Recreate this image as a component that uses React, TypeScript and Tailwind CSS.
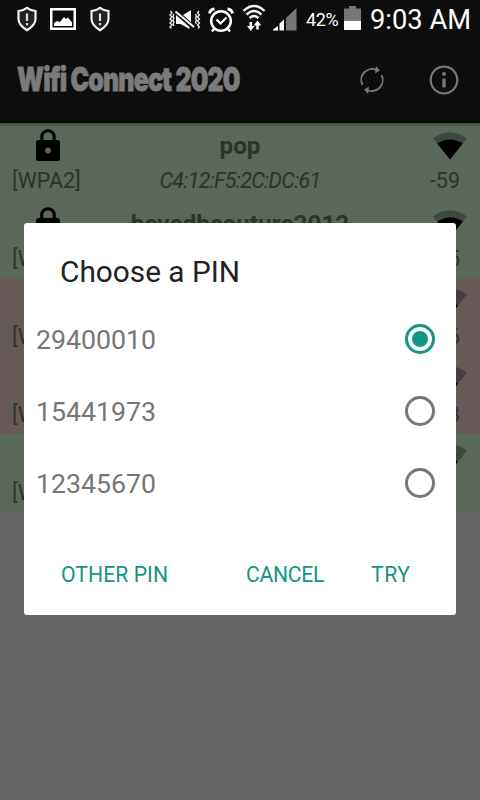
import type { ReactNode } from "react";

function ShieldIcon() {
  return (
    <svg width="20" height="26" viewBox="0 0 20 26" fill="none" stroke="#f4f4f4" strokeWidth="2.200">
      <path d="M10 1.800 Q13.500 4.500 18.500 5 V13 C18.500 18 14.500 21.500 10 24.300 C5.500 21.500 1.500 18 1.500 13 V5 Q6.500 4.500 10 1.800Z" fill="#222" />
      <path d="M10 7.500V15M10 17v2.200" stroke="#ddd" />
    </svg>
  );
}

function PictureIcon() {
  return (
    <svg width="26" height="22" viewBox="0 0 26 22">
      <rect x="1.250" y="1.250" width="23.500" height="19.500" fill="none" stroke="#fff" strokeWidth="2.500" />
      <path d="M4 18v-3l3-2 3 1 4-5 2 2 2-1.500 4 5V18Z" fill="#fff" />
    </svg>
  );
}

function MuteIcon() {
  return (
    <svg width="32" height="22" viewBox="0 0 32 22">
      <path d="M7 7v8h4.500l9 5v-2L7 6ZM14 6l8-5v12Z" fill="#fff" />
      <path d="M6.500 2.500 L25 18" stroke="#fff" strokeWidth="2.200" />
      <path d="M1.500 2l1.500 2-2 2 2 2-2 2 2 2-2 2 2 2-2 2 1.500 1.500M5 5l-1 2 1 2-1 2 1 2-1 2 1 2M30 2l-1.500 2 2 2-2 2 2 2-2 2 2 2-2 2 2 2-1.500 1.500M26.500 5l1 2-1 2 1 2-1 2 1 2" fill="none" stroke="#eee" strokeWidth="1.300" />
    </svg>
  );
}

function AlarmIcon() {
  return (
    <svg width="26" height="26" viewBox="0 0 26 26" fill="none" stroke="#fff">
      <circle cx="13" cy="14" r="9.800" strokeWidth="2.500" />
      <path d="M8.500 12.500l4 4 6-6" strokeWidth="2.200" />
      <path d="M1.500 6.500Q2 2.500 6.500 2M24.500 6.500Q24 2.500 19.500 2" strokeWidth="2.800" />
      <path d="M6.500 21.500L4 24.500M19.500 21.500l2.500 3" strokeWidth="2.500" />
    </svg>
  );
}

function WifiTransferIcon() {
  return (
    <svg width="24" height="27" viewBox="0 0 24 27" fill="none" stroke="#f2f2f2">
      <path d="M1.500 7Q12-3 22.500 7M4.500 10.500Q12 3.500 19.500 10.500M7.500 14Q12 10 16.500 14" strokeWidth="2.400" />
      <path d="M8.800 18v6M15.500 25.500v-6" strokeWidth="2.600" />
      <path d="M5 22h7.600l-3.800 5ZM11.700 21.500h7.600L15.500 16.500Z" fill="#fff" stroke="none" />
    </svg>
  );
}

function SignalIcon() {
  return (
    <svg width="24" height="23" viewBox="0 0 24 23">
      <path d="M0 22.500v-1l5-3.500v4.500ZM6.500 22.500v-7l4.500-4v11Z" fill="#fff" />
      <path d="M13 22.500V10L23.500 0v22.500Z" fill="#777" />
    </svg>
  );
}

function BatteryIcon() {
  return (
    <svg width="17" height="24" viewBox="0 0 17 24">
      <path d="M0 2.500h5V0h7v2.500h5V15H0Z" fill="#777" />
      <path d="M0 15h17v9H0Z" fill="#fff" />
    </svg>
  );
}

function LockIcon() {
  return (
    <svg width="24" height="32" viewBox="0 0 24 32">
      <path d="M5.800 12V7.500a6.200 5.800 0 0 1 12.400 0V12" fill="none" stroke="#000" strokeWidth="3" />
      <path fillRule="evenodd" d="M2.500 11h19a2.500 2.500 0 0 1 2.500 2.500v16a2.500 2.500 0 0 1-2.500 2.500h-19A2.500 2.500 0 0 1 0 29.500v-16A2.500 2.500 0 0 1 2.500 11ZM12 18.500a3 3 0 1 0 0 6 3 3 0 0 0 0-6Z" fill="#000" />
    </svg>
  );
}

function WifiIcon({ level }: { level: number }) {
  return (
    <svg width="34" height="28" viewBox="0 0 34 28">
      <path d="M0 6.500Q17-6 34 6.500L17 27.500Z" fill="#000" fillOpacity=".3" />
      {level === 3 && <path d="M4.300 11.500Q17 3.500 29.700 11.500L17 27.500Z" fill="#000" />}
      {level === 2 && <path d="M6.500 14.500Q17 6 27.500 14.500L17 27.500Z" fill="#000" />}
      {level === 1 && <path d="M9 17.500Q17 12 25 17.500L17 27.500Z" fill="#000" />}
    </svg>
  );
}

interface Network {
  name: string;
  mac: string;
  signal: string;
  level: number;
  tone: string;
}

const networks: Network[] = [
  { name: "pop", mac: "C4:12:F5:2C:DC:61", signal: "-59", level: 3, tone: "bg-[#5a6859]" },
  { name: "beyedbcouture2012", mac: "", signal: "-65", level: 3, tone: "bg-[#5a6859]" },
  { name: "", mac: "", signal: "-76", level: 1, tone: "bg-[#685959]" },
  { name: "", mac: "", signal: "-83", level: 1, tone: "bg-[#685959]" },
  { name: "", mac: "", signal: "", level: 1, tone: "bg-[#5a6859]" },
];

function NetworkRow({ name, mac, signal, level, tone }: Network) {
  return (
    <div className={`${tone} flex h-[78px] justify-between border-b border-black/5 text-[#2b342b]`}>
      <div className="w-24 pl-3">
        <div className="flex h-[42px] pt-[7px] pl-6"><LockIcon /></div>
        <div className="h-8 text-[21.500px] leading-[34px]">[WPA2]</div>
      </div>
      <div className="w-[280px] text-center">
        <div className="h-[42px] pt-2 text-[24.300px] leading-8 font-bold">{name}</div>
        <div className="h-8 text-[21.500px] leading-[34px] tracking-[-0.75px] italic">{mac}</div>
      </div>
      <div className="flex w-24 flex-col items-end">
        <div className="h-[42px] pt-[10px] pr-[13px]"><WifiIcon level={level} /></div>
        <div className="h-8 pr-5 text-[21.500px] leading-[34px]">{signal}</div>
      </div>
    </div>
  );
}

function PinOption({ pin, selected = false }: { pin: string; selected?: boolean }) {
  return (
    <div className="flex h-[72px] items-center justify-between pr-[21px] pl-3">
      <span className="pt-[2px] text-[26.700px] text-[#767676]">{pin}</span>
      <span className={`flex size-[30px] items-center justify-center rounded-full border-[3px] ${selected ? "border-[#129783]" : "border-[#777]"}`}>
        {selected && <span className="size-4 rounded-full bg-[#129783]" />}
      </span>
    </div>
  );
}

function DialogButton({ children, className }: { children: ReactNode; className: string }) {
  return <button className={`text-left text-[21.200px] whitespace-nowrap text-[#159580] ${className}`}>{children}</button>;
}

export default function App() {
  return (
    <div className="relative h-[800px] w-[480px] overflow-hidden bg-[#646464] font-[Roboto,sans-serif]">
      <div className="flex h-10 items-start bg-[#0d0d0d] pl-[17px] text-white">
        <div className="mt-[6px]"><ShieldIcon /></div>
        <div className="mt-2 ml-[13px]"><PictureIcon /></div>
        <div className="mt-[6px] ml-[14px]"><ShieldIcon /></div>
        <div className="mt-[9px] ml-[59px]"><MuteIcon /></div>
        <div className="mt-[7px] ml-[7px]"><AlarmIcon /></div>
        <div className="mt-1 ml-[8px]"><WifiTransferIcon /></div>
        <div className="mt-2 ml-[7px]"><SignalIcon /></div>
        <div className="mt-[7px] ml-[9px] w-[38px] text-[18px] leading-[26px] tracking-[-0.4px]">42%</div>
        <div className="mt-[6px]"><BatteryIcon /></div>
        <div className="mt-1 ml-[9px] text-[27.300px] leading-8 whitespace-nowrap">9:03 AM</div>
      </div>
      <div className="relative z-10 flex h-[83px] items-center justify-between bg-[#0d0d0d] pr-[21px] pb-1 pl-[17px]">
        <h1 className="w-[226px] origin-left scale-x-[0.755] font-[Inter,sans-serif] text-[33px] font-black tracking-[-1.100px] whitespace-nowrap text-[#7b7b7b] [-webkit-text-stroke:0.800px_#7b7b7b]">Wifi Connect 2020</h1>
        <div className="flex items-center gap-[44px]">
          <svg width="26" height="30" viewBox="0 0 26 30" fill="none" stroke="#777" strokeWidth="1.900">
            <path d="M3.500 20A11 11 0 0 1 18 5M22.500 10A11 11 0 0 1 8 25" />
            <path d="M17 1l4 4.500-5 3ZM9 29l-4-4.500 5-3Z" fill="#777" stroke="none" />
          </svg>
          <svg width="30" height="30" viewBox="0 0 30 30">
            <circle cx="15" cy="15" r="13.300" fill="none" stroke="#777" strokeWidth="2.200" />
            <path d="M13.300 13.500h3.400v9h-3.400Z" fill="#777" />
            <circle cx="15" cy="9" r="2" fill="#777" />
          </svg>
        </div>
      </div>
      <div className="relative -mt-px">
        {networks.map((network, index) => <NetworkRow key={index} {...network} />)}
        <div className="absolute inset-x-0 top-px h-1 bg-linear-to-b from-black/25 to-transparent" />
      </div>
      <section className="absolute top-[223px] left-6 z-20 h-[392px] w-[432px] rounded-[3px] bg-white">
        <h2 className="h-20 pt-[31px] pl-[36px] text-[29.800px] leading-9 text-[#222]">Choose a PIN</h2>
        <PinOption pin="29400010" selected />
        <PinOption pin="15441973" />
        <PinOption pin="12345670" />
        <div className="flex h-[96px] items-center pt-[16px] pl-[37px]">
          <DialogButton className="w-[185px] tracking-[0.050px]">OTHER PIN</DialogButton>
          <DialogButton className="w-[125px] tracking-[-0.300px]">CANCEL</DialogButton>
          <DialogButton className="w-[60px] tracking-[0.500px]">TRY</DialogButton>
        </div>
      </section>
    </div>
  );
}
